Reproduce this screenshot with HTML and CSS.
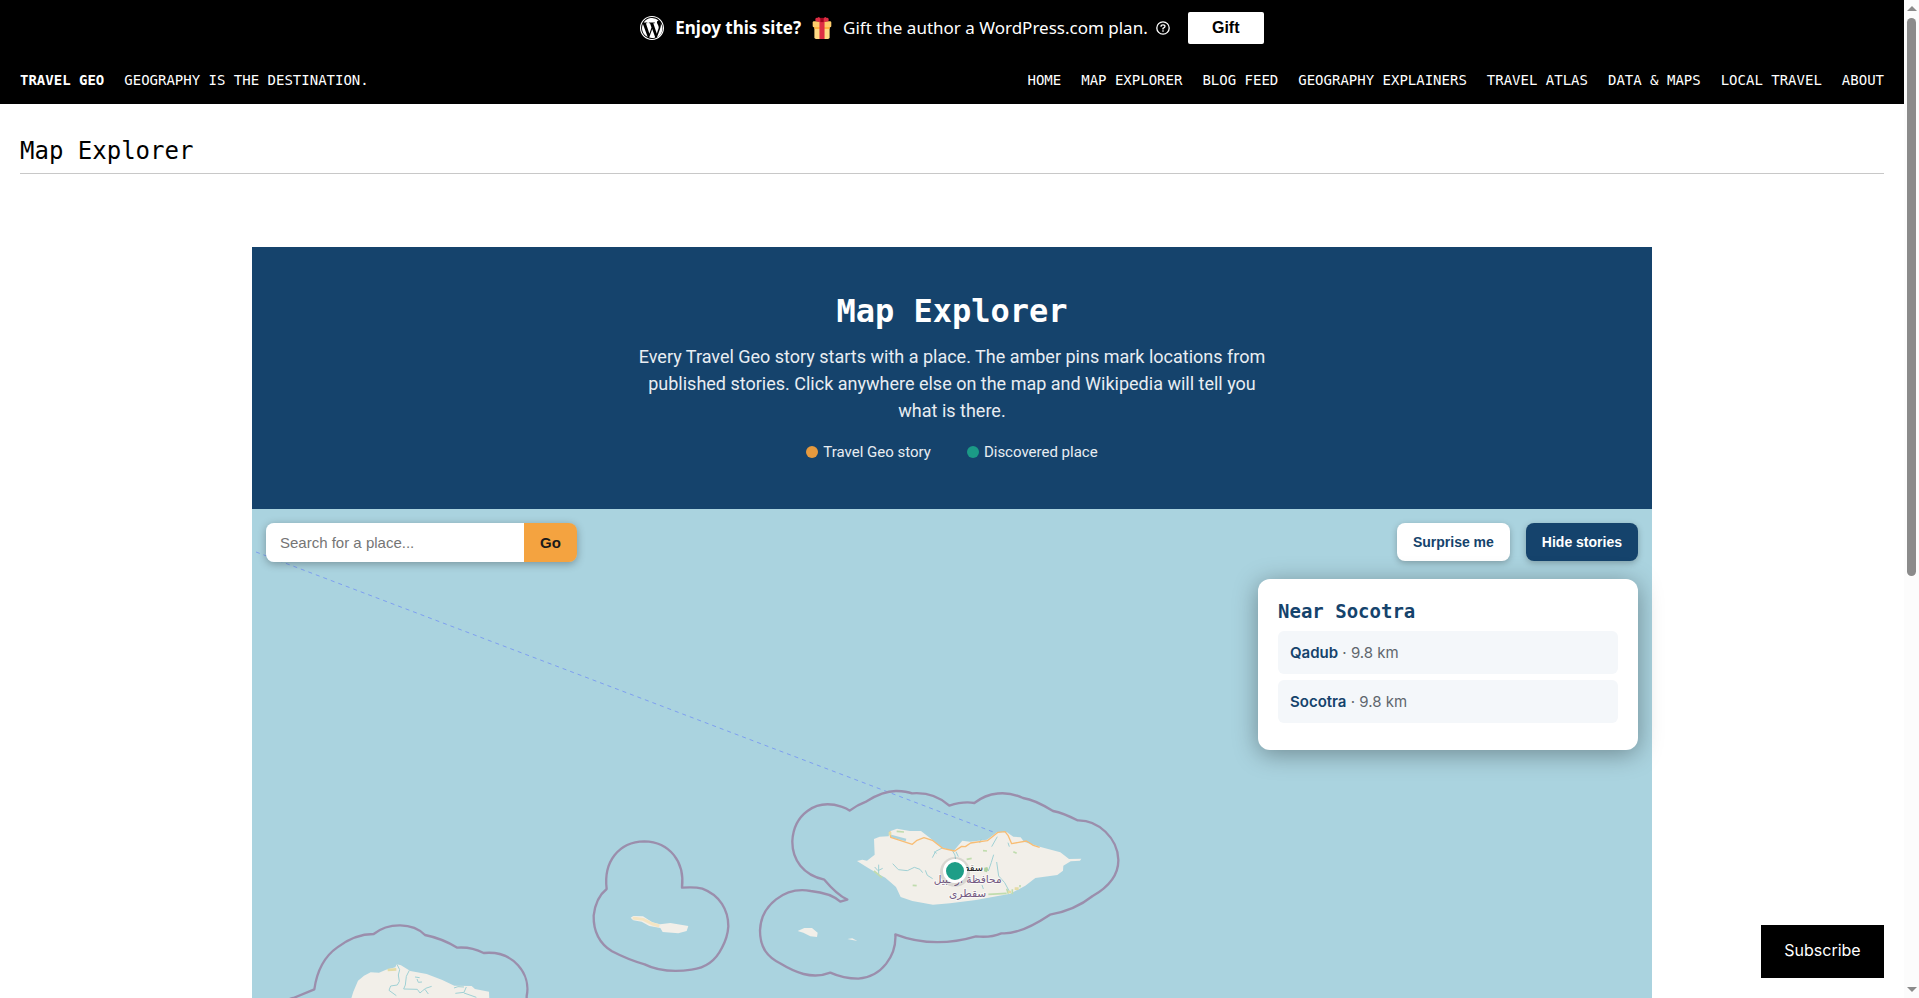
FILE: index.html
```html
<!DOCTYPE html>
<html lang="en">
<head>
<meta charset="utf-8">
<title>Map Explorer – Travel Geo</title>
<link rel="stylesheet" href="styles.css">
</head>
<body>
<div class="page">
  <div class="gift-banner">
    <svg class="wp-logo" viewBox="0 0 24 24" aria-hidden="true">
      <path fill="#fff" d="M12 0C5.4 0 0 5.4 0 12s5.400 12 12 12 12-5.400 12-12S18.600 0 12 0zm0 1.100C18 1.100 22.900 6 22.900 12S18 22.900 12 22.900 1.100 18 1.100 12 6 1.100 12 1.100z"/>
      <path fill="#fff" d="M2 12c0 4 2.300 7.400 5.700 9L2.900 8C2.300 9.200 2 10.600 2 12zm16.700-.5c0-1.200-.4-2.100-.8-2.800-.5-.8-1-1.500-1-2.400 0-.9.700-1.800 1.700-1.800h.1A10 10 0 0 0 3.700 6.500h.6c1 0 2.700-.1 2.700-.1.500 0 .6.700.1.800 0 0-.6.100-1.200.1l3.500 10.500 2.100-6.400-1.500-4.100-1-.1c-.5 0-.5-.8.100-.8 0 0 1.600.1 2.600.1 1.100 0 2.700-.1 2.700-.1.600 0 .6.700.1.800 0 0-.6.100-1.200.1l3.500 10.400 1-3.200c.6-1.300.9-2.300.9-3zm-6.500 1.400-3 8.700a10 10 0 0 0 6.100-.2l-.1-.1zm8.600-5.700.1 1.300c0 1.300-.2 2.800-1 4.700L16.900 21.600A10 10 0 0 0 20.800 7.200z"/>
    </svg>
    <strong>Enjoy this site?</strong>
    <svg class="gift-icon" viewBox="0 0 22 26" aria-hidden="true">
      <path d="M2 11h18v13q0 2-2 2H4q-2 0-2-2z" fill="#ffd983"/>
      <path d="M2 11h18v3H2z" fill="#ffac33"/>
      <path d="M1.500 5h19q1.500 0 1.500 1.500v4q0 1.500-1.500 1.500h-19Q0 12 0 10.500v-4Q0 5 1.500 5z" fill="#ffcc6b"/>
      <path d="M8 5h6v21H8z" fill="#dd2e44"/>
      <path d="M11 6Q3 6 3 3.500 3 0 6 1l1-1q3 1 4 4 1-3 4-4l1 1q3-1 3 2.500Q19 6 11 6z" fill="#dd2e44"/>
      <path d="M9 1h4v5H9z" fill="#a0041e"/>
    </svg>
    <span>Gift the author a WordPress.com plan.</span>
    <svg class="help-icon" viewBox="0 0 14 14" fill="none" stroke="#fff" stroke-width="1.300" aria-hidden="true">
      <circle cx="7" cy="7" r="6.200"/>
      <path d="M5 5.700Q5 3.800 7 3.800T9 5.500Q9 6.500 7 7.400V8.400M7 9.300v1.400"/>
    </svg>
    <button class="gift-button" type="button">Gift</button>
  </div>
  <header class="site-header">
    <a class="brand" href="#">TRAVEL GEO</a>
    <span class="tagline">GEOGRAPHY IS THE DESTINATION.</span>
    <nav class="menu">
      <a href="#">HOME</a><a href="#">MAP EXPLORER</a><a href="#">BLOG FEED</a><a href="#">GEOGRAPHY EXPLAINERS</a><a href="#">TRAVEL ATLAS</a><a href="#">DATA &amp; MAPS</a><a href="#">LOCAL TRAVEL</a><a href="#">ABOUT</a>
    </nav>
  </header>
  <main>
    <h1 class="page-title">Map Explorer</h1>
    <div class="explorer">
      <section class="hero">
        <h2>Map Explorer</h2>
        <p>Every Travel Geo story starts with a place. The amber pins mark locations from published stories. Click anywhere else on the map and Wikipedia will tell you what is there.</p>
        <ul class="legend">
          <li><i class="dot amber"></i>Travel Geo story</li>
          <li><i class="dot teal"></i>Discovered place</li>
        </ul>
      </section>
      <section class="map">
        <svg class="map-canvas" viewBox="252 509 1400 600" role="img" aria-label="Map of the Socotra archipelago">
          <rect x="252" y="509" width="1400" height="600" fill="#aad3df"/>
          <path class="ferry" d="M256 552 L996 833"/>
          <g transform="translate(780 770) scale(.33333)">
            <path class="border" d="M202 389 C178 377 154 354 133 329 C70 315 36 270 37 213 C41 136 105 84 184 110 C194 113 203 117 209 122 C223 111 241 101 260 94 Q310 62 350 63 Q380 64 396 70 Q462 65 508 107 Q550 93 583 99 C625 66 680 61 729 84 Q764 89 819 123 Q850 129 892 151 C955 149 1013 205 1015 269 C1016 315 985 351 938 378 Q884 421 810 434 Q718 495 664 490 Q630 504 588 499 Q460 537 346 493 C350 557 305 621 235 626 Q190 626 151 608 C95 630 43 606 0 580 C-37 561 -60 535 -60 481 C-57 405 15 349 92 363 Q152 369 181 395 Z"/>
            <path class="land" d="M231 273 L247 269 261 272 284 254 282 207 299 200 326 199 330 184 351 176 389 183 423 183 451 205 488 234 521 243 547 212 570 215 621 209 652 186 681 187 700 200 722 202 732 215 779 230 841 247 867 267 904 266 900 272 872 274 850 287 849 302 832 315 766 324 736 347 691 371 588 390 510 400 459 404 397 393 362 381 348 351 316 323 291 310 261 292 Z"/>
            <g class="river">
              <path d="M284 291l10 11 14-7M296 284v28M338 281l17 18 27 3 21-10 17 6 8 10M436 301l6 15 16 10M457 263l10-19 20-10M518 243l7 12 4 35M535 260l-7-15M641 254l-7 23-9 26M650 276l6 42 18 20 15 28M599 219l5-12M635 230l17-30M470 250l-8-5M606 345l4 12M684 218l4 12"/>
            </g>
            <path class="lagoon" d="M333 198L378 210"/>
            <path class="road" d="M330 184L332 202 397 223 411 211 432 203 457 211 488 235 524 243 545 229 556 230 572 219 622 212 654 187 675 185 684 196 695 221 739 213 760 226 779 232"/>
            <path class="scrub" d="M350 184l22 2M609 242l12 1M560 268l15-3M680 356l5 15M697 358v15M720 345v7M282 303l24 20M398 346l12 1M700 245l10 5M625 373l55-3"/>
            <path class="wood" d="M613 293l9-2 3 8-5 8-8-3z"/>
            <path class="sand" d="M330 186v10M704 356h12M684 366h9"/>
            <path class="land" d="M53 483L73 474 96 474 113 488 111 501 91 499 70 488Z M202 507L217 505 232 513Z"/>
            <g text-anchor="middle" class="labels">
              <text class="city" x="557" y="303">سقطرى</text>
              <text class="region" x="563" y="340">محافظة أرخبيل</text>
              <text class="region" x="563" y="380">سقطرى</text>
            </g>
          </g>
          <g transform="translate(570 820) scale(.33333)">
            <path class="border" d="M110 207 C100 125 145 66 223 64 C300 66 345 126 336 203 Q375 200 397 206 C450 226 475 270 475 319 Q473 352 455 385 C432 432 398 445 365 449 Q280 461 224 433 Q178 421 126 394 C88 370 70 336 71 287 Q77 233 110 207Z"/>
            <path class="land" d="M182 293L190 288 219 289 247 307 270 313 301 309 355 318 350 333 325 340 278 336 271 324 238 318 215 305 190 301Z"/>
            <path class="beach" d="M188 294L220 298 248 312 268 318"/>
          </g>
          <g transform="translate(240 890) scale(.33333)">
            <path class="border" d="M36 380Q110 337 160 324 L223 298 Q235 212 292 172 Q345 132 401 132 C445 97 518 97 555 135 Q605 145 652 173 Q694 170 731 189 C820 180 874 253 860 318 L860 400"/>
            <path class="land" d="M320 370 L340 305 354 272 372 257 392 247 417 248 438 239 466 232 470 223 483 226 511 243 560 252 607 270 643 287 695 288 705 297 747 305 748 330 735 400Z"/>
            <path class="river" d="M471 223L479 239 475 255 478 274 472 285 452 288 447 301 469 317M508 241l-9 18-3 26-5 12 41 1 8 11 8-7 9-7 18-6M555 298l10 14M525 261l14 2M531 267l4 10 11-1M642 294l12-4 18 1M646 310l26-3 7-16M672 309l37 13"/>
            <path class="sand" d="M443 240l26-2"/>
          </g>
          <circle cx="955" cy="872" r="15" fill="#000" opacity=".10"/>
          <circle cx="955" cy="871" r="10.500" fill="#1e9e87" stroke="#fff" stroke-width="3"/>
        </svg>
        <div class="map-tools">
          <form class="search">
            <input type="text" placeholder="Search for a place..." aria-label="Search for a place">
            <button type="button">Go</button>
          </form>
          <div class="actions">
            <button type="button">Surprise me</button>
            <button type="button" class="active">Hide stories</button>
          </div>
        </div>
        <aside class="nearby">
          <h3>Near Socotra</h3>
          <ul>
            <li><a href="#">Qadub</a> · 9.8 km</li>
            <li><a href="#">Socotra</a> · 9.8 km</li>
          </ul>
        </aside>
      </section>
    </div>
  </main>
</div>
<div class="scrollbar" aria-hidden="true"><i class="arrow up"></i><div class="track"><div class="thumb"></div></div><i class="arrow down"></i></div>
<button class="subscribe" type="button">Subscribe</button>
</body>
</html>
```
FILE: styles.css
```css
* { box-sizing: border-box; }
body {
  margin: 0;
  height: 100vh;
  display: flex;
  overflow: hidden;
  background: #fff;
  font-family: Inter, "Liberation Sans", sans-serif;
}
h1, h2, h3, p, ul { margin: 0; padding: 0; }
ul { list-style: none; }
a { color: inherit; text-decoration: none; }
button { border: 0; cursor: pointer; }
.page { flex: 1; min-width: 0; overflow: hidden; }

.gift-banner {
  height: 56px;
  background: #000;
  color: #fff;
  display: flex;
  align-items: center;
  justify-content: center;
  font: 17px/24px "Noto Sans", sans-serif;
}
.wp-logo { width: 24px; height: 24px; margin-right: 11px; }
.gift-icon { width: 20px; height: 22px; margin: 0 11px; }
.help-icon { width: 14px; height: 14px; margin: 0 18px 0 8px; }
.gift-button {
  width: 76px;
  height: 32px;
  border-radius: 2px;
  background: #fff;
  color: #000;
  font: bold 16px "Liberation Sans", sans-serif;
}

.site-header {
  height: 48px;
  padding: 0 20px;
  background: #000;
  color: #fff;
  display: flex;
  align-items: center;
  gap: 20px;
  font: 14px/20px "DejaVu Sans Mono", monospace;
}
.brand { font-weight: bold; }
.menu { margin-left: auto; display: flex; gap: 20px; }

.page-title {
  margin: 26px 20px 0;
  padding: 5px 0 6px;
  border-bottom: 1px solid #c8c8c8;
  font: 24px/32px "DejaVu Sans Mono", monospace;
}
.explorer { max-width: 1400px; margin: 73px auto 0; }
.hero {
  padding: 44px 20px 46px;
  background: #15436c;
  color: #fff;
  text-align: center;
}
.hero h2 { font: bold 32px/40px "DejaVu Sans Mono", monospace; }
.hero p {
  max-width: 640px;
  margin: 12px auto 17px;
  font: 18px/27px Roboto, sans-serif;
  color: #e8edf2;
}
.legend {
  display: flex;
  justify-content: center;
  gap: 36px;
  font: 15px/22px Roboto, sans-serif;
  color: #e8edf2;
}
.legend li { display: flex; align-items: center; gap: 5px; }
.dot { width: 12px; height: 12px; border-radius: 50%; }
.amber { background: #e69a3e; }
.teal { background: #1b9a86; }

.map { position: relative; background: #aad3df; }
.map-canvas { display: block; width: 100%; height: auto; }
.border { fill: none; stroke: #9b8eac; stroke-width: 7; stroke-linejoin: round; }
.land { fill: #f2efe9; }
.beach { fill: none; stroke: #f5e5c3; stroke-width: 9; }
.river { fill: none; stroke: #9fd0d4; stroke-width: 3; }
.lagoon { fill: none; stroke: #aad3df; stroke-width: 7; }
.road { fill: none; stroke: #f8bd74; stroke-width: 4; stroke-linejoin: round; }
.scrub { fill: none; stroke: #c0dcae; stroke-width: 5; }
.wood { fill: #add19e; }
.sand { fill: none; stroke: #e5dca5; stroke-width: 8; }
.ferry { fill: none; stroke: #7e9ff0; stroke-width: 1; stroke-dasharray: 4 4; }
.labels text { font-family: "DejaVu Sans", sans-serif; stroke: #fff; stroke-width: 5; stroke-opacity: .7; paint-order: stroke; }
.city { font-size: 30px; fill: #222; }
.region { font-size: 32px; fill: #755a82; }

.map-tools {
  position: absolute;
  inset: 14px 14px auto;
  display: flex;
  justify-content: space-between;
  align-items: flex-start;
}
.search {
  display: flex;
  height: 39px;
  border-radius: 8px;
  overflow: hidden;
  box-shadow: 0 2px 8px rgba(0, 0, 0, .3);
}
.search input {
  width: 258px;
  padding: 0 14px;
  border: 0;
  font: 15px "Liberation Sans", sans-serif;
}
.search input::placeholder { color: #757575; }
.search button {
  width: 53px;
  background: #f4a340;
  color: #1a1a1a;
  font: bold 15px "Liberation Sans", sans-serif;
}
.actions { display: flex; gap: 16px; }
.actions button {
  height: 38px;
  padding: 0 16px;
  border-radius: 8px;
  background: #fff;
  color: #15436c;
  font: bold 14px "Liberation Sans", sans-serif;
  box-shadow: 0 2px 6px rgba(0, 0, 0, .25);
}
.actions .active { background: #15436c; color: #fff; }

.nearby {
  position: absolute;
  top: 70px;
  right: 14px;
  width: 380px;
  padding: 20px 20px 27px;
  border-radius: 12px;
  background: #fff;
  box-shadow: 0 4px 24px rgba(0, 0, 0, .35);
}
.nearby h3 {
  margin-bottom: 8px;
  color: #15436c;
  font: bold 19px/24px "DejaVu Sans Mono", monospace;
}
.nearby ul { display: grid; gap: 6px; }
.nearby li {
  padding: 10px 12px;
  border-radius: 6px;
  background: #f4f7fa;
  color: #5f666d;
  font-size: 15px;
  line-height: 23px;
}
.nearby li a { color: #15436c; font-weight: 600; }

.scrollbar {
  width: 15px;
  background: #fcfcfc;
  display: flex;
  flex-direction: column;
  align-items: center;
  justify-content: space-between;
  padding: 6px 0;
}
.track { flex: 1; padding: 7px 0; }
.thumb { width: 9px; height: 58%; border-radius: 5px; background: #8b8b8b; }
.arrow { border: 5px solid transparent; }
.up { border-top: 0; border-bottom-color: #8b8b8b; }
.down { border-bottom: 0; border-top-color: #8b8b8b; }

.subscribe {
  position: fixed;
  right: 35px;
  bottom: 20px;
  width: 123px;
  height: 53px;
  padding: 0 0 3px;
  background: #000;
  color: #fff;
  font: 16px Inter, sans-serif;
}
```
